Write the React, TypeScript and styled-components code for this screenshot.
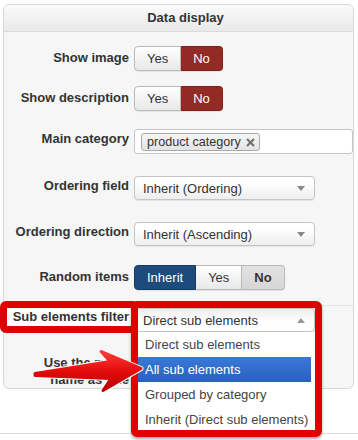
import React from 'react';
import styled, { createGlobalStyle, css } from 'styled-components';

const GlobalStyle = createGlobalStyle`
  body {
    margin: 0;
    background: #fff;
    font-family: "Liberation Sans", Arial, sans-serif;
    font-size: 13px;
    color: #333;
  }
`;

const Page = styled.div`
  position: relative;
  width: 358px;
  height: 440px;
  overflow: hidden;
`;

const Panel = styled.div`
  margin: 4px 4px 0 3px;
  border: 1px solid #d9d9d9;
  border-radius: 6px;
  background: #f6f6f6;
`;

const PanelHeader = styled.div`
  height: 26px;
  line-height: 26px;
  padding-left: 14px;
  text-align: center;
  font-weight: bold;
  color: #333;
  border-bottom: 1px solid #dcdcdc;
  border-radius: 5px 5px 0 0;
  background: linear-gradient(#fafafa, #e9e9e9);
`;

const Row = styled.div<{ $gap: number; $divided?: boolean }>`
  display: flex;
  align-items: flex-start;
  gap: 5px;
  margin-top: ${p => p.$gap}px;
  ${p => p.$divided && css`
    border-top: 1px solid #e3e3e3;
    padding-top: 2px;
  `}
`;

const Label = styled.div<{ $pt?: number }>`
  flex: none;
  width: 125px;
  box-sizing: border-box;
  padding: ${p => p.$pt ?? 0}px 0 0 8px;
  text-align: right;
  font-weight: bold;
  line-height: 18px;
  color: #333;
`;

const MarkedLabel = styled(Label)`
  position: relative;
  z-index: 2;
  width: 139px;
  margin: -7px -10px 0 -4px;
  padding: 0 3px 0 0;
  border: 7px solid #e10000;
  border-radius: 6px;
  background: #fff;
`;

const LongLabel = styled(Label)`
  line-height: 17px;
`;

const ToggleGroup = styled.div`
  display: inline-flex;
  border-radius: 4px;
  box-shadow: 0 1px 1px rgba(0, 0, 0, 0.08);
`;

type Variant = 'plain' | 'danger' | 'primary' | 'muted';

const variants = {
  plain: css`
    background: linear-gradient(#fff, #e8e8e8);
    color: #333;
  `,
  danger: css`
    background: #942a25;
    border-color: #7f211c;
    color: #fff;
  `,
  primary: css`
    background: #1d4b7b;
    border-color: #163b62;
    color: #fff;
  `,
  muted: css`
    background: linear-gradient(#e2e2e2, #d6d6d6);
    color: #333;
    font-weight: bold;
  `,
};

const Segment = styled.div<{ $variant: Variant }>`
  height: 25px;
  box-sizing: border-box;
  padding: 0 12px;
  line-height: 23px;
  border: 1px solid #b9b9b9;
  border-left-width: 0;
  &:first-child {
    border-left-width: 1px;
    border-radius: 4px 0 0 4px;
  }
  &:last-child {
    border-radius: 0 4px 4px 0;
  }
  ${p => variants[p.$variant]}
`;

const TagInput = styled.div`
  flex: 1;
  height: 25px;
  box-sizing: border-box;
  padding: 3px 0 0 6px;
  border: 1px solid #c6c6c6;
  border-radius: 3px;
  background: #fff;
`;

const Tag = styled.span`
  display: inline-flex;
  align-items: center;
  gap: 5px;
  height: 18px;
  box-sizing: border-box;
  padding: 0 4px 0 5px;
  border: 1px solid #aaa;
  border-radius: 3px;
  background: linear-gradient(#f6f6f6, #e4e4e4);
  font-size: 12.6px;
  color: #333;
`;

const Select = styled.div<{ $open?: boolean }>`
  width: 181px;
  height: 24px;
  box-sizing: border-box;
  display: flex;
  align-items: center;
  justify-content: space-between;
  padding: 0 9px 0 8px;
  border: 1px solid #c4c4c4;
  border-radius: 4px;
  background: ${p => (p.$open ? 'linear-gradient(#eee, #fff 60%)' : 'linear-gradient(#fff 25%, #eee)')};
  box-shadow: 0 1px 1px rgba(0, 0, 0, 0.07);
  color: #333;
`;

const Caret = styled.span<{ $up?: boolean }>`
  width: 0;
  height: 0;
  border-left: 4px solid transparent;
  border-right: 4px solid transparent;
  ${p => (p.$up ? 'border-bottom: 5px solid #999;' : 'border-top: 5px solid #888;')}
`;

const OpenSelect = styled.div`
  position: relative;
  z-index: 3;
  width: 181px;
`;

const DropList = styled.div`
  position: absolute;
  top: 24px;
  left: 0;
  width: 181px;
  box-sizing: border-box;
  padding-right: 4px;
  background: #fff;
`;

const Option = styled.div<{ $active?: boolean }>`
  height: 25px;
  line-height: 25px;
  padding-left: 11px;
  color: #444;
  white-space: nowrap;
  ${p => p.$active && css`
    background: linear-gradient(#3a78da, #2a61bb);
    color: #fff;
  `}
`;

const Frame = styled.div`
  position: absolute;
  top: -7px;
  left: -3px;
  width: 191px;
  height: 136px;
  box-sizing: border-box;
  border: 7px solid #e10000;
  border-radius: 6px;
  box-shadow: 0 2px 3px rgba(0, 0, 0, 0.35);
  pointer-events: none;
`;

const Divider = styled.div`
  margin-top: 44px;
  border-top: 1px solid #dcdcdc;
`;

const Pointer = styled.svg`
  position: absolute;
  left: 0;
  top: 0;
  z-index: 10;
  pointer-events: none;
`;

const RemoveIcon = () => (
  <svg width="9" height="9" viewBox="0 0 9 9">
    <path d="M1 1L8 8M8 1L1 8" stroke="#6f6f6f" strokeWidth="2" />
  </svg>
);

const arrowPath = 'M35 373.5 L110 361.5 L101 351.5 L141 368.5 L103 390.5 L111 378.5 L35 375.5 Z';

const Toggle = ({ items }: { items: [string, Variant][] }) => (
  <ToggleGroup>
    {items.map(([text, v]) => (
      <Segment key={text} $variant={v}>{text}</Segment>
    ))}
  </ToggleGroup>
);

const options = ['Direct sub elements', 'All sub elements', 'Grouped by category', 'Inherit (Direct sub elements)'];

export default function App() {
  return (
    <Page>
      <GlobalStyle />
      <Panel>
        <PanelHeader>Data display</PanelHeader>

        <Row $gap={14}>
          <Label $pt={3}>Show image</Label>
          <Toggle items={[['Yes', 'plain'], ['No', 'danger']]} />
        </Row>

        <Row $gap={15}>
          <Label $pt={3}>Show description</Label>
          <Toggle items={[['Yes', 'plain'], ['No', 'danger']]} />
        </Row>

        <Row $gap={18}>
          <Label $pt={1}>Main category</Label>
          <TagInput>
            <Tag>product category <RemoveIcon /></Tag>
          </TagInput>
        </Row>

        <Row $gap={22}>
          <Label $pt={1}>Ordering field</Label>
          <Select>Inherit (Ordering)<Caret /></Select>
        </Row>

        <Row $gap={22}>
          <Label $pt={1}>Ordering direction</Label>
          <Select>Inherit (Ascending)<Caret /></Select>
        </Row>

        <Row $gap={19}>
          <Label $pt={3}>Random items</Label>
          <Toggle items={[['Inherit', 'primary'], ['Yes', 'plain'], ['No', 'muted']]} />
        </Row>

        <Row $gap={15} $divided>
          <MarkedLabel>Sub elements filter</MarkedLabel>
          <OpenSelect>
            <Select $open>Direct sub elements<Caret $up /></Select>
            <DropList>
              {options.map((o, i) => (
                <Option key={o} $active={i === 1}>{o}</Option>
              ))}
            </DropList>
            <Frame />
          </OpenSelect>
        </Row>

        <Row $gap={21}>
          <LongLabel>Use the menu name as title</LongLabel>
        </Row>
      </Panel>
      <Divider />

      <Pointer width="358" height="440" viewBox="0 0 358 440">
        <defs>
          <linearGradient id="arrowFill" x1="0" y1="0" x2="0" y2="1">
            <stop offset="0" stopColor="#ff3b3b" />
            <stop offset="0.5" stopColor="#e30c0c" />
            <stop offset="1" stopColor="#b80000" />
          </linearGradient>
        </defs>
        <path d={arrowPath} fill="#fff" stroke="#fff" strokeWidth="5" strokeLinejoin="round" />
        <path d={arrowPath} fill="url(#arrowFill)" stroke="url(#arrowFill)" strokeWidth="3" strokeLinejoin="round" />
      </Pointer>
    </Page>
  );
}
